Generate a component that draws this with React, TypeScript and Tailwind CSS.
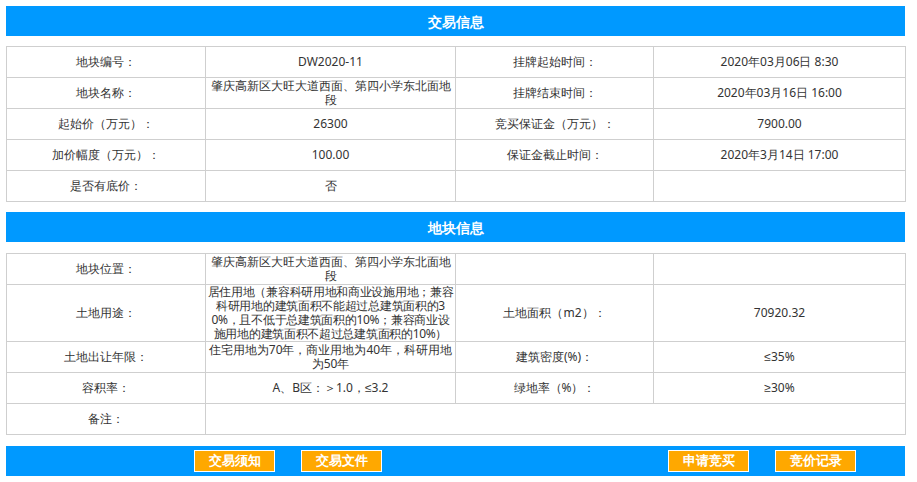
const td = "border border-[#cfcfcf] text-center align-middle px-0 leading-[14px] text-[12px] text-[#333] break-all overflow-hidden";
function Row({ tall, cells }: { tall?: boolean; cells: string[] }) {
  return (
    <tr className={tall ? "h-[56px]" : "h-[31px]"}>
      {cells.map((c, i) => (
        <td key={i} className={td}>{i === 1 && tall ? <div className="h-[56px] overflow-hidden flex items-center tracking-[-0.3px]">{c}</div> : c}</td>
      ))}
    </tr>
  );
}
function Cols() {
  return (
    <colgroup>
      <col className="w-[199px]" /><col className="w-[250px]" /><col className="w-[198px]" /><col className="w-[252px]" />
    </colgroup>
  );
}
function Btn({ t }: { t: string }) {
  return <div className="w-[81px] h-[22px] bg-[#ffa800] border border-white text-white font-bold text-[13px] flex items-center justify-center">{t}</div>;
}
export default function App() {
  return (
    <div className="w-[917px] h-[482px] bg-white px-[6px] pt-[6px] font-['Microsoft_YaHei','Noto_Sans_CJK_SC',sans-serif]">
      <div className="w-[899px] h-[30px] bg-[#0099ff] text-white font-bold text-[14px] flex items-center justify-center">交易信息</div>
      <table className="mt-[10px] w-[899px] table-fixed border-collapse">
        <Cols />
        <tbody>
          <Row cells={["地块编号：", "DW2020-11", "挂牌起始时间：", "2020年03月06日 8:30"]} />
          <Row cells={["地块名称：", "肇庆高新区大旺大道西面、第四小学东北面地段", "挂牌结束时间：", "2020年03月16日 16:00"]} />
          <Row cells={["起始价（万元）：", "26300", "竞买保证金（万元）：", "7900.00"]} />
          <Row cells={["加价幅度（万元）：", "100.00", "保证金截止时间：", "2020年3月14日 17:00"]} />
          <Row cells={["是否有底价：", "否", "", ""]} />
        </tbody>
      </table>
      <div className="mt-[10px] w-[899px] h-[30px] bg-[#0099ff] text-white font-bold text-[14px] flex items-center justify-center">地块信息</div>
      <table className="mt-[11px] w-[899px] table-fixed border-collapse">
        <Cols />
        <tbody>
          <Row cells={["地块位置：", "肇庆高新区大旺大道西面、第四小学东北面地段", "", ""]} />
          <Row tall cells={["土地用途：", "居住用地（兼容科研用地和商业设施用地；兼容科研用地的建筑面积不能超过总建筑面积的30%，且不低于总建筑面积的10%；兼容商业设施用地的建筑面积不超过总建筑面积的10%）", "土地面积（m2）：", "70920.32"]} />
          <Row cells={["土地出让年限：", "住宅用地为70年，商业用地为40年，科研用地为50年", "建筑密度(%)：", "≤35%"]} />
          <Row cells={["容积率：", "A、B区：＞1.0，≤3.2", "绿地率（%）：", "≥30%"]} />
          <tr className="h-[31px]">
            <td className={td}>备注：</td>
            <td className={td} colSpan={3}></td>
          </tr>
        </tbody>
      </table>
      <div className="mt-[11px] w-[899px] h-[30px] bg-[#0099ff] flex items-center">
        <div className="ml-[188px]"><Btn t="交易须知" /></div>
        <div className="ml-[26px]"><Btn t="交易文件" /></div>
        <div className="ml-[286px]"><Btn t="申请竞买" /></div>
        <div className="ml-[26px]"><Btn t="竞价记录" /></div>
      </div>
    </div>
  );
}
